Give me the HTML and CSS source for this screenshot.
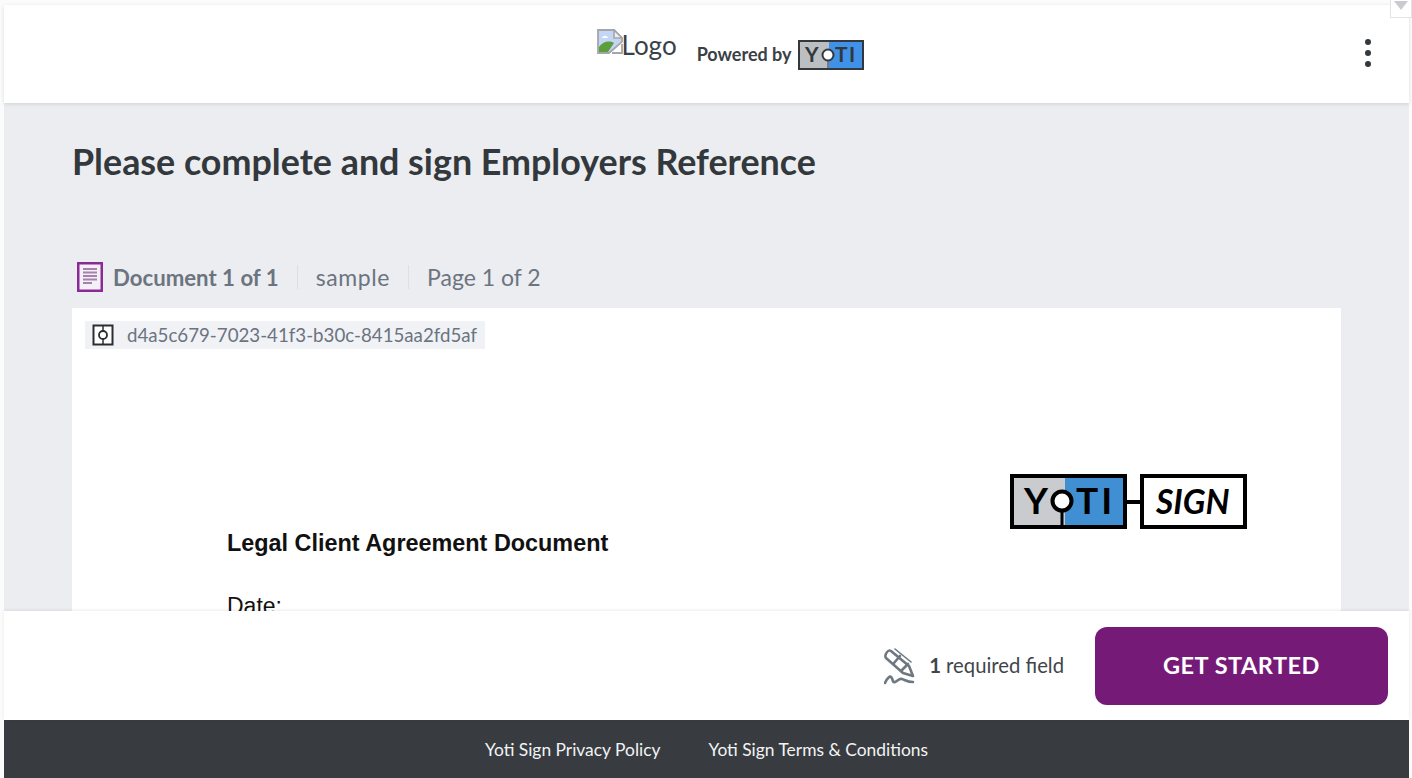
FILE: index.html
```html
<!DOCTYPE HTML>
<html lang="en">
<head>
    <meta name="viewport" content="width=device-width, initial-scale=1">
    <title>Yoti Sign</title>
    <link rel="stylesheet" href="styles.css">
</head>
<body>
    <div class="corner-tab">
        <svg width="14" height="9" viewBox="0 0 14 9"><path d="M0 0H14L7 9Z" fill="#c9cbce"/></svg>
    </div>
    <div class="app">
        <header class="topbar">
            <div class="brand">
                <div class="broken-logo">
                    <svg class="broken-icon" width="26" height="25" viewBox="0 0 26 25">
                        <path d="M1 1H17L25 9V13L12 24H1Z" fill="#c4d6f5" stroke="#a4a6a9" stroke-width="1.800"/>
                        <path d="M5 9c1-3 5-3 6 0z" fill="#fff"/>
                        <path d="M2 23v-5c3-5 10-7 15-4l-6 9z" fill="#5c9e3c"/>
                        <path d="M17 1V9H25Z" fill="#eee" stroke="#a4a6a9" stroke-width="1.600"/>
                        <path d="M26 13 13 25H26Z" fill="#fff"/>
                        <path d="M25 15V24H15" fill="none" stroke="#a4a6a9" stroke-width="1.800"/>
                    </svg>
                    <span class="broken-alt">Logo</span>
                </div>
                <div class="powered">
                    <span class="powered-text">Powered by</span>
                    <svg class="yoti-small" width="66" height="30" viewBox="0 0 66 30">
                        <rect x="1" y="1" width="30" height="28" fill="#bcbfc2"/>
                        <rect x="31" y="1" width="34" height="28" fill="#3f92e8"/>
                        <rect x="1" y="1" width="64" height="28" fill="none" stroke="#33383c" stroke-width="2"/>
                        <path d="M30 15V29" stroke="#33383c" stroke-width="1"/>
                        <text x="7" y="22" class="yoti-word-small">Y</text>
                        <text x="37" y="22" class="yoti-word-small">TI</text>
                        <circle cx="30" cy="15" r="5.500" fill="#fff" stroke="#33383c" stroke-width="2"/>
                    </svg>
                </div>
            </div>
            <div class="kebab"><i></i><i></i><i></i></div>
        </header>

        <main class="content">
            <h1 class="page-title">Please complete and sign Employers Reference</h1>
            <div class="doc-info">
                <svg class="doc-icon" width="26" height="30" viewBox="0 0 26 30">
                    <rect x="1.250" y="1.250" width="23.500" height="27.500" fill="#f4f1f6" stroke="#8a2a95" stroke-width="2.500"/>
                    <path d="M6 7H20M6 10.500H20M6 14H20M6 17.500H20M6 21H15" stroke="#a583ad" stroke-width="2"/>
                </svg>
                <strong class="doc-count">Document 1 of 1</strong>
                <span class="doc-item doc-name">sample</span>
                <span class="doc-item">Page 1 of 2</span>
            </div>
            <section class="doc-card">
                <div class="doc-id">
                    <svg width="22" height="22" viewBox="0 0 22 22">
                        <rect x="1.500" y="1.500" width="19" height="19" fill="#fff" stroke="#2b2e31" stroke-width="2"/>
                        <path d="M11 2V20" stroke="#2b2e31" stroke-width="1.500"/>
                        <circle cx="11" cy="11" r="4" fill="#fff" stroke="#2b2e31" stroke-width="1.800"/>
                    </svg>
                    <span>d4a5c679-7023-41f3-b30c-8415aa2fd5af</span>
                </div>
                <div class="doc-body">
                    <div class="doc-logo-row">
                        <svg width="238" height="56" viewBox="0 0 238 56">
                            <rect x="3" y="2" width="113" height="51" fill="#c9cbce"/>
                            <rect x="56" y="2" width="60" height="51" fill="#3f8fd2"/>
                            <rect x="3" y="2" width="113" height="51" fill="none" stroke="#000" stroke-width="4"/>
                            <path d="M53 27V53" stroke="#000" stroke-width="3"/>
                            <text x="15" y="40" class="yoti-word">Y</text>
                            <text x="67" y="40" class="yoti-word">TI</text>
                            <circle cx="53" cy="27" r="9.500" fill="#fff" stroke="#000" stroke-width="4"/>
                            <path d="M116 28H133" stroke="#000" stroke-width="4"/>
                            <rect x="133" y="2" width="103" height="51" fill="#fff" stroke="#000" stroke-width="4"/>
                            <text x="147" y="40" class="sign-word">SIGN</text>
                        </svg>
                    </div>
                    <h2 class="doc-heading">Legal Client Agreement Document</h2>
                    <p class="doc-date">Date:</p>
                </div>
            </section>
        </main>

        <div class="action-bar">
            <svg class="pen-icon" width="32" height="37" viewBox="0 0 32 37" fill="none" stroke="#6f7880" stroke-width="2.600" stroke-linecap="round" stroke-linejoin="round">
                <path d="M7 3 25 18 29 28 19 25 2 10C0 7 4 1 7 3Z"/>
                <path d="M10 15 16 8M17 23 24 16"/>
                <path d="M11 1 27 14" stroke-width="1.600"/>
                <path d="M1 35C3 30 6 28 7 29 9 30 8 35 11 34 14 33 15 30 18 31 21 32 24 34 29 34"/>
            </svg>
            <p class="req-text"><b>1</b> required field</p>
            <button class="start-btn">GET STARTED</button>
        </div>

        <footer class="footer">
            <a>Yoti Sign Privacy Policy</a>
            <a>Yoti Sign Terms &amp; Conditions</a>
        </footer>
    </div>
</body>
</html>
```

FILE: styles.css
```css
* {
    box-sizing: border-box;
}
body {
    margin: 0;
    height: 778px;
    overflow: hidden;
    background: #fbfbfc;
    font-family: "Lato", "Open Sans", sans-serif;
    position: relative;
}
.app {
    width: 1405px;
    height: 778px;
    margin-left: 4px;
    padding-top: 5px;
    display: flex;
    flex-direction: column;
}
.corner-tab {
    position: absolute;
    top: -2px;
    right: 0;
    width: 22px;
    height: 20px;
    background: #fff;
    border: 1px solid #e2e3e5;
    display: flex;
    justify-content: center;
    padding-top: 2px;
    z-index: 5;
}
.topbar {
    height: 98px;
    flex: none;
    background: #fff;
    box-shadow: 0 1px 4px rgba(0, 0, 0, 0.12);
    display: flex;
    align-items: center;
    justify-content: center;
    position: relative;
    z-index: 2;
}
.brand {
    display: flex;
    align-items: flex-start;
    gap: 20px;
    height: 39px;
    margin-top: -1px;
    margin-left: 47px;
    width: 267px;
}
.broken-logo {
    display: flex;
    align-items: flex-start;
    margin-top: -5px;
}
.broken-alt {
    font-size: 26px;
    line-height: 30px;
    color: #3a4045;
    margin-left: -1px;
    margin-top: 1px;
}
.powered {
    display: flex;
    align-items: center;
    gap: 6px;
    margin-top: 6px;
    font-size: 18px;
    font-weight: 700;
    color: #3a4045;
    white-space: nowrap;
}
.powered-text {
    padding-bottom: 3px;
}
.yoti-word-small {
    font: 700 21px "Lato", sans-serif;
    fill: #33383c;
    letter-spacing: 1.500px;
}
.kebab {
    position: absolute;
    right: 38px;
    top: 34px;
    display: flex;
    flex-direction: column;
    gap: 5px;
}
.kebab i {
    width: 6px;
    height: 6px;
    border-radius: 50%;
    background: #33383c;
}
.content {
    flex: 1;
    min-height: 0;
    overflow: hidden;
    background: #ebedf0;
    padding: 38px 68px 0 68px;
}
.page-title {
    margin: 0;
    font-size: 35.850px;
    line-height: 42px;
    font-weight: 700;
    color: #33383c;
    white-space: nowrap;
}
.doc-info {
    display: flex;
    align-items: center;
    margin-top: 78px;
    margin-left: 5px;
    height: 32px;
    color: #6b7480;
    font-size: 23px;
}
.doc-count {
    margin-left: 10px;
    font-size: 22.200px;
    font-weight: 700;
}
.doc-item {
    margin-left: 18px;
    padding-left: 18px;
    border-left: 1px solid #dcdfe3;
    line-height: 24px;
}
.doc-name {
    letter-spacing: 0.600px;
}
.doc-card {
    margin-top: 15px;
    background: #fff;
    height: 400px;
    padding-top: 13px;
}
.doc-id {
    display: inline-flex;
    align-items: center;
    gap: 13px;
    height: 28px;
    margin-left: 13px;
    padding: 0 8px 0 7px;
    background: #f1f2f5;
    color: #6b7480;
    font-size: 18.700px;
}
.doc-body {
    padding: 0 94px 0 155px;
    color: #111;
    font-family: "Liberation Sans", Arial, sans-serif;
}
.doc-logo-row {
    display: flex;
    justify-content: flex-end;
    margin-top: 125px;
}
.yoti-word {
    font: 700 37px "Lato", sans-serif;
    fill: #000;
    letter-spacing: 3px;
}
.sign-word {
    font: italic 700 33.500px "Lato", sans-serif;
    fill: #000;
}
.doc-heading {
    margin: -1px 0 0;
    font-size: 23.400px;
    line-height: 28px;
    font-weight: 700;
}
.doc-date {
    margin: 35px 0 0;
    font-size: 23px;
    line-height: 28px;
}
.action-bar {
    height: 109px;
    flex: none;
    background: #fff;
    box-shadow: 0 -1px 3px rgba(0, 0, 0, 0.08);
    display: flex;
    align-items: center;
    justify-content: flex-end;
    padding: 0 21px 0 0;
    position: relative;
    z-index: 2;
}
.pen-icon {
    margin-right: 13px;
    margin-top: 1px;
}
.req-text {
    margin: 0 31px 2px 0;
    font-size: 20.300px;
    color: #3f464b;
}
.start-btn {
    width: 293px;
    height: 78px;
    margin-top: 1px;
    padding-bottom: 3px;
    border: none;
    border-radius: 12px;
    background: #761a78;
    color: #fff;
    font-family: inherit;
    font-size: 23.500px;
    font-weight: 700;
    letter-spacing: 0.500px;
}
.footer {
    height: 58px;
    flex: none;
    background: #383c40;
    display: flex;
    justify-content: center;
    align-items: center;
    gap: 48px;
    color: #f2f3f4;
    font-size: 17.400px;
    padding-top: 1px;
}
```
